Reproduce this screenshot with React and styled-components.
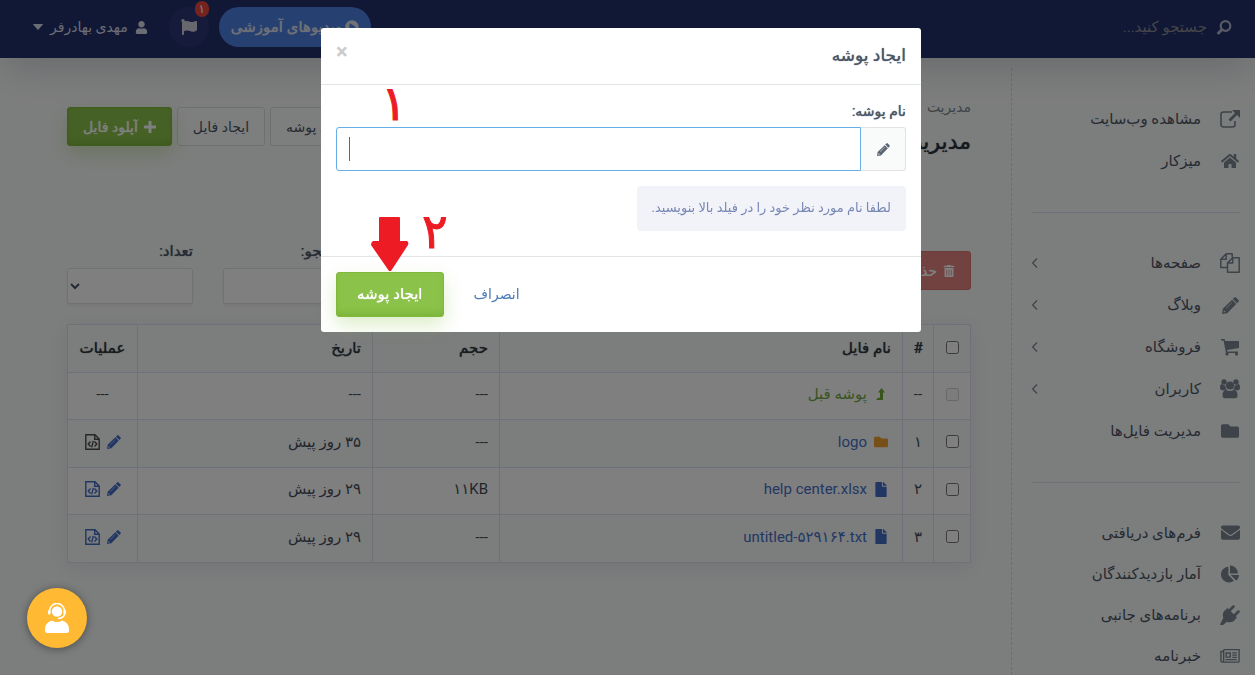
import React, { useState } from "react";
import styled, { createGlobalStyle } from "styled-components";
import {
  FaChartPie,
  FaEnvelope,
  FaFile,
  FaFlag,
  FaFolder,
  FaHome,
  FaPlayCircle,
  FaTrashAlt,
  FaUser,
} from "react-icons/fa";

const GlobalStyle = createGlobalStyle`
  * {
    box-sizing: border-box;
  }

  body {
    margin: 0;
    background: #f9fbfa;
    color: #4c5667;
    font-family: Roboto, "DejaVu Sans", sans-serif;
    font-size: 14px;
    line-height: 20px;
    overflow: hidden;
  }

  button,
  input,
  select {
    font: inherit;
    color: inherit;
  }

  a {
    color: inherit;
    text-decoration: none;
  }
`;

const Page = styled.div`
  direction: rtl;
  height: 100vh;
  display: flex;
  flex-direction: column;
`;

const Topbar = styled.header`
  display: flex;
  align-items: center;
  padding: 7px 23px 11px 33px;
  background: #22306c;
  color: #d7dbe8;
  box-shadow: 0 14px 36px -4px rgba(40, 40, 70, 0.18);
  z-index: 1;
`;

const SearchBox = styled.label`
  display: flex;
  align-items: center;
  gap: 10px;
  flex: 1;

  svg {
    color: #b0b5c9;
  }

  input {
    border: 0;
    padding: 0;
    background: none;
    outline: none;
    font-size: 15px;
  }

  input::placeholder {
    color: #8b8b93;
    opacity: 1;
  }
`;

const VideoButton = styled.button`
  display: flex;
  align-items: center;
  justify-content: space-between;
  width: 152px;
  height: 40px;
  padding: 0 12px;
  border: 0;
  border-radius: 20px;
  background: #4d80e4;
  color: #dfe3ec;
  font-size: 15px;
  white-space: nowrap;
  text-shadow: 0 0 1px currentColor;
`;

const FlagButton = styled.button`
  position: relative;
  width: 40px;
  height: 40px;
  margin: 0 10px 0 21px;
  padding: 0;
  border: 0;
  border-radius: 50%;
  background: #2d3677;
  color: #cdd1dc;

  svg {
    display: block;
    margin: 0 auto;
  }
`;

const Badge = styled.span`
  position: absolute;
  top: -6px;
  right: 0;
  width: 14px;
  height: 16px;
  border-radius: 8px;
  background: #e9473f;
  color: #fff;
  font-size: 12px;
  line-height: 16px;
`;

const UserMenu = styled.button`
  display: flex;
  align-items: center;
  gap: 7px;
  padding: 0;
  border: 0;
  background: none;
`;

const Columns = styled.div`
  display: flex;
  flex: 1;
  min-height: 0;
`;

const Sidebar = styled.nav`
  width: 244px;
  flex: none;
  margin-top: 10px;
  padding: 30px 15px 0 20px;
  border-left: 1px dashed #d8dadb;
  overflow: hidden;
`;

const MenuGroup = styled.ul`
  list-style: none;
  margin: 0 0 29px;
  padding: 0 0 30px;
  border-bottom: 1px solid #dfe1f0;

  &:last-child {
    border: 0;
  }
`;

const MenuItem = styled.li`
  height: ${(props) => (props.$dense ? "41px" : "42px")};

  a {
    display: flex;
    align-items: center;
    height: 100%;
    gap: 19px;
    font-size: 15px;
  }

  span {
    flex: 1;
  }
`;

const MenuIcon = styled.i`
  display: flex;
  justify-content: center;
  width: 20px;
  color: #7b8793;
`;

const Content = styled.main`
  flex: 1;
  min-width: 0;
  padding: 39px 40px 0 67px;
`;

const PageHead = styled.div`
  display: flex;
  justify-content: space-between;
  align-items: flex-start;
  height: 144px;
  padding-top: 10px;
`;

const Breadcrumb = styled.div`
  margin-top: -10px;
  color: #7c8790;
`;

const Title = styled.h1`
  margin: 10px 0 0;
  color: #2b343f;
  font-size: 22px;
  font-weight: normal;
  line-height: 30px;
  text-shadow: 0 0 1px currentColor;
`;

const Actions = styled.div`
  display: flex;
  gap: 5px;
`;

const Button = styled.button`
  display: flex;
  align-items: center;
  justify-content: center;
  gap: 6px;
  height: 39px;
  padding: 0 15px;
  border: 1px solid #dcdfe3;
  border-radius: 3px;
  background: #fbfcfc;
`;

const GreenButton = styled(Button)`
  border-color: #7fb83a;
  background: #8bc34a;
  color: #fff;
  text-shadow: 0 0 1px currentColor;
  box-shadow: inset 0 -5px 8px -4px #74ac33,
    0 8px 18px rgba(139, 195, 74, 0.3);
`;

const RedButton = styled(Button)`
  border-color: #d87472;
  background: #e58481;
  color: #fff;
  text-shadow: 0 0 1px currentColor;
`;

const Filters = styled.div`
  display: flex;
  align-items: flex-start;
  gap: 30px;
  margin-bottom: 20px;

  ${RedButton} {
    margin: 10px 0 0 auto;
  }
`;

const Field = styled.label`
  width: 126px;
  font-size: 15px;
  text-shadow: 0 0 1px currentColor;

  input,
  select {
    display: block;
    width: 100%;
    height: 36px;
    margin-top: 7px;
    padding: 0 5px;
    border: 1px solid #e0e2e6;
    border-radius: 3px;
    background: #fff;
    box-shadow: 0 2px 3px rgba(0, 0, 0, 0.06);
  }
`;

const FileTable = styled.table`
  width: 100%;
  border-collapse: collapse;
  table-layout: fixed;
  color: #454d58;
  box-shadow: 0 4px 20px rgba(70, 70, 130, 0.1);

  th,
  td {
    height: 47px;
    padding: 0 11px 4px;
    border: 1px solid #e0e2f0;
    text-align: right;
    font-size: 15px;
  }

  th {
    height: 48px;
    padding-bottom: 2px;
    color: #303841;
    font-weight: normal;
    text-shadow: 0 0 1px currentColor;
  }

  tbody tr:nth-child(odd) {
    background: #fff;
  }

  tbody tr:nth-child(even) td {
    height: 48px;
  }

  th:nth-child(2),
  td:nth-child(2),
  th:last-child,
  td:last-child {
    padding-left: 0;
    padding-right: 0;
    text-align: center;
  }

  input {
    display: block;
    margin: 0;
  }
`;

const FileLink = styled.a`
  display: flex;
  align-items: center;
  gap: 7px;
  color: ${(props) => props.$color || "#4770c9"};

  svg {
    width: 14px;
    margin-right: 3px;
    color: ${(props) => props.$iconColor};
  }
`;

const RowActions = styled.div`
  display: flex;
  align-items: center;
  justify-content: center;
  gap: 7px;
  color: #426cc7;

  svg {
    display: block;
  }

  a:last-child {
    color: ${(props) => (props.$dark ? "#4c4c4c" : "#426cc7")};
  }
`;

const Backdrop = styled.div`
  position: fixed;
  inset: 0;
  z-index: 10;
  padding: 28px 13px 0 0;
  direction: rtl;
  background: rgba(0, 0, 0, 0.5);
`;

const Dialog = styled.form`
  position: relative;
  max-width: 600px;
  margin: 0 auto;
  border-radius: 3px;
  background: #fff;
`;

const DialogHead = styled.div`
  display: flex;
  justify-content: space-between;
  height: 57px;
  padding: 14px 15px;
  border-bottom: 1px solid #e2e4e6;

  h2 {
    margin: 0;
    font-size: 17px;
    font-weight: normal;
    line-height: 26px;
    text-shadow: 0 0 1px currentColor;
  }
`;

const CloseButton = styled.button`
  height: 20px;
  padding: 0;
  border: 0;
  background: none;
  color: #ccc;
  font-weight: bold;
  font-size: 22px;
  line-height: 20px;
`;

const DialogBody = styled.div`
  padding: 16px 15px 25px;

  label {
    display: block;
    margin-bottom: 6px;
    text-shadow: 0 0 1px currentColor;
  }
`;

const InputGroup = styled.div`
  display: flex;
  height: 44px;

  input {
    flex: 1;
    min-width: 0;
    padding: 0 12px;
    border: 1px solid #66afe9;
    border-radius: 3px 0 0 3px;
    outline: none;
    background: #fff linear-gradient(#5d6874, #5d6874) 12px center / 1px 24px
      no-repeat;
  }
`;

const Addon = styled.span`
  display: flex;
  align-items: center;
  justify-content: center;
  width: 45px;
  border: 1px solid #e0e2e5;
  border-left: 0;
  border-radius: 0 3px 3px 0;
  background: #f9fafa;
  color: #5c6672;
`;

const Hint = styled.p`
  width: fit-content;
  margin: 15px 0 0;
  padding: 12px 15px 13px;
  border-radius: 4px;
  background: #f2f3f9;
  color: #7888b4;
  font-size: 13px;
`;

const DialogFoot = styled.div`
  display: flex;
  justify-content: flex-end;
  gap: 10px;
  padding: 15px;
  border-top: 1px solid #e2e4e6;

  button {
    height: 45px;
    padding: 0 20px 2px;
    font-size: 15px;
  }
`;

const CancelButton = styled.button`
  border: 0;
  background: none;
  color: #4a7ab8;

  && {
    font-size: 14px;
  }
`;

const StepNumber = styled.span`
  position: absolute;
  top: ${(props) => props.$top}px;
  left: ${(props) => props.$left}px;
  color: #ed1c24;
  font-size: 48px;
  line-height: 56px;
  -webkit-text-stroke: 1px #ed1c24;
`;

const StepArrow = styled.svg`
  position: absolute;
  top: 189px;
  left: 50px;
`;

const SupportButton = styled.button`
  position: fixed;
  left: 27px;
  bottom: 27px;
  z-index: 20;
  width: 60px;
  height: 60px;
  padding: 0;
  border: 0;
  border-radius: 50%;
  background: #ffb932;
  box-shadow: 0 1px 8px rgba(0, 0, 0, 0.4);

  svg {
    display: block;
    margin: 0 auto;
  }
`;

const SearchIcon = () => (
  <svg width="15" height="15" viewBox="0 0 15 15" fill="none">
    <circle cx="8.500" cy="6" r="4.800" stroke="currentColor" strokeWidth="2.200" />
    <path
      d="M5 9.500 1.500 13"
      stroke="currentColor"
      strokeWidth="3"
      strokeLinecap="round"
    />
  </svg>
);

const CaretIcon = () => (
  <svg width="10" height="6" viewBox="0 0 10 6" fill="currentColor">
    <path d="M.5 0h9q.8 0 .2.800L5.500 5.500q-.5.500-1 0L.3.800Q-.3 0 .5 0z" />
  </svg>
);

const PlusIcon = () => (
  <svg width="12" height="12" viewBox="0 0 12 12" fill="currentColor">
    <path d="M4.500 0h3v4.500H12v3H7.500V12h-3V7.500H0v-3h4.500z" />
  </svg>
);

const PencilIcon = ({ size }) => (
  <svg width={size} height={size} viewBox="0 0 17 17" fill="currentColor">
    <path d="M12.300.6q.9-.9 1.800 0l2.300 2.300q.9.900 0 1.800L14.900 6.200 10.800 2.100z" />
    <path
      fillRule="evenodd"
      d="M10.100 2.800 14.200 6.900 5.200 16.200 0 17l.8-5.200zM9.900 5.200 4 11.100l.3.300 5.900-5.900zM1.900 13.700l-.3 1.700 1.700-.3v-.9h-.9v-.5z"
    />
  </svg>
);

const BackIcon = () => (
  <svg width="10" height="13" viewBox="0 0 10 13" fill="currentColor">
    <path d="M5.500 0 9 4.500H7V12H0L2 9.800h2V4.500H2z" />
  </svg>
);

const CodeFileIcon = () => (
  <svg
    width="15"
    height="16"
    viewBox="0 0 15 16"
    fill="none"
    stroke="currentColor"
    strokeWidth="1.400"
  >
    <path d="M.8.700h9.200L14.200 5v10.300H.8zM9.700.7v4.500h4.500" />
    <path d="M5.500 7.500 3.200 10l2.300 2.500M9.500 7.500l2.300 2.500-2.300 2.500M8.300 6.800l-1.600 6.500" />
  </svg>
);

const ExternalIcon = () => (
  <svg width="20" height="18" viewBox="0 0 20 18" fill="none">
    <path
      d="M12 2H3.500Q1 2 1 4.500v9.500Q1 17 3.500 17h9Q15 17 15 14.500V11"
      stroke="currentColor"
      strokeWidth="1.600"
    />
    <path d="M12 0h8v8l-3-3-6.500 6.500L8.500 9.500 15 3z" fill="currentColor" />
  </svg>
);

const CopyIcon = () => (
  <svg
    width="20"
    height="20"
    viewBox="0 0 20 20"
    fill="none"
    stroke="currentColor"
    strokeWidth="1.500"
    strokeLinejoin="round"
  >
    <path d="M7 14.500H.8V6.200L6.200.8h6V4.500M6.200.8v5.400H.8" />
    <path d="M12.700 4.700h6.500v14.500H7.500V9.900zM12.700 4.700v5.200H7.500" />
  </svg>
);

const CartIcon = () => (
  <svg width="18" height="17" viewBox="0 0 18 17" fill="currentColor">
    <path d="M0 0h3.500l.8 2H18v7L6 11l.4 1.500H17V14H5L2.500 1.500H0z" />
    <rect x="4.500" y="13.500" width="3" height="3" rx="1" />
    <rect x="14" y="13.500" width="3" height="3" rx="1" />
  </svg>
);

const UsersIcon = () => (
  <svg width="20" height="20" viewBox="0 0 20 20" fill="currentColor">
    <circle cx="4" cy="3" r="2.700" />
    <circle cx="16" cy="3" r="2.700" />
    <circle cx="10" cy="6.500" r="4" />
    <path d="M5.300 6.300Q5.300 9 7 10.500 4.500 10.500 3.500 11.300 0 11.300 0 9q0-4 1.800-4 2 1.700 3.500 1.300zM14.700 6.300Q14.700 9 13 10.500q2.500 0 3.500.8 3.500 0 3.500-2.300 0-4-1.800-4-2 1.700-3.500 1.300z" />
    <path d="M6 10.800q4 2.400 8 0 3.500.4 3.500 5.700 0 2.800-2.500 2.800H5q-2.500 0-2.500-2.800 0-5.300 3.500-5.700z" />
  </svg>
);

const PlugIcon = () => (
  <svg width="20" height="20" viewBox="0 0 20 20" fill="currentColor">
    <path d="M5 5 15 15q-3.500 3.500-8 1.700L3 20H.5L0 19.500 3.300 13Q1.800 8.500 5 5z" />
    <path d="m5 5.500 2.500-2.500 9.500 9.500-2.500 2.500z" />
    <path
      d="m9 6 4.500-4.500M14 11l4.500-4.500"
      stroke="currentColor"
      strokeWidth="2.500"
      strokeLinecap="round"
    />
  </svg>
);

const NewsIcon = () => (
  <svg width="22" height="16" viewBox="0 0 22 16" fill="none" stroke="currentColor">
    <path
      d="M4 1h17v12.500q0 1.300-1.300 1.300H2.500Q1 14.800 1 13V3h3M4 1v12q0 1.800-1.500 1.800"
      strokeWidth="1.500"
    />
    <path d="M6.700 4.700h4.600v4.600H6.700z" strokeWidth="1.500" />
    <path d="M13.500 4.500h5M13.500 7h5M13.500 9.500h5M6 12h12.500" strokeWidth="1.300" />
  </svg>
);

const ChevronIcon = () => (
  <svg width="8" height="12" viewBox="0 0 8 12" fill="none">
    <path d="M5 1.500.6 6 5 10.500" stroke="#7d8594" strokeWidth="1.200" />
  </svg>
);

const SupportIcon = () => (
  <svg width="24" height="30" viewBox="0 0 24 30" fill="#fff">
    <circle cx="12" cy="8.500" r="5.200" />
    <path
      d="M4.500 10V8a7.500 7.500 0 0 1 15 0v2q0 5-6.500 5.500"
      fill="none"
      stroke="#fff"
      strokeWidth="1.500"
    />
    <rect x="3" y="7" width="2.500" height="4.500" rx="1" />
    <rect x="18.500" y="7" width="2.500" height="4.500" rx="1" />
    <path d="M7 17.500q5 3 10 0 7 2 7 8.500v2q0 2-2 2H2q-2 0-2-2v-2q0-6.500 7-8.500z" />
  </svg>
);

const menuGroups = [
  {
    items: [
      { title: "مشاهده وب‌سایت", icon: <ExternalIcon /> },
      { title: "میزکار", icon: <FaHome size={18} /> },
    ],
  },
  {
    items: [
      { title: "صفحه‌ها", icon: <CopyIcon />, sub: true },
      { title: "وبلاگ", icon: <PencilIcon size={17} />, sub: true },
      { title: "فروشگاه", icon: <CartIcon />, sub: true },
      { title: "کاربران", icon: <UsersIcon />, sub: true },
      { title: "مدیریت فایل‌ها", icon: <FaFolder size={18} /> },
    ],
  },
  {
    dense: true,
    items: [
      { title: "فرم‌های دریافتی", icon: <FaEnvelope size={19} /> },
      { title: "آمار بازدیدکنندگان", icon: <FaChartPie size={18} /> },
      { title: "برنامه‌های جانبی", icon: <PlugIcon /> },
      { title: "خبرنامه", icon: <NewsIcon /> },
    ],
  },
];

const files = [
  { id: "۱", name: "logo", size: "---", date: "۳۵ روز پیش", folder: true },
  { id: "۲", name: "help center.xlsx", size: "۱۱KB", date: "۲۹ روز پیش" },
  { id: "۳", name: "untitled-۵۲۹۱۶۴.txt", size: "---", date: "۲۹ روز پیش" },
];

const FileManager = () => (
  <FileTable>
    <colgroup>
      <col style={{ width: 37 }} />
      <col style={{ width: 31 }} />
      <col />
      <col style={{ width: 127 }} />
      <col style={{ width: 235 }} />
      <col style={{ width: 70 }} />
    </colgroup>
    <thead>
      <tr>
        <th>
          <input type="checkbox" aria-label="همه" />
        </th>
        <th>#</th>
        <th>نام فایل</th>
        <th>حجم</th>
        <th>تاریخ</th>
        <th>عملیات</th>
      </tr>
    </thead>
    <tbody>
      <tr>
        <td>
          <input type="checkbox" aria-label="پوشه قبل" disabled />
        </td>
        <td>--</td>
        <td>
          <FileLink href="#" $color="#74a83a" $iconColor="#74a83a">
            <BackIcon />
            پوشه قبل
          </FileLink>
        </td>
        <td>---</td>
        <td>---</td>
        <td>---</td>
      </tr>
      {files.map((file) => (
        <tr key={file.id}>
          <td>
            <input type="checkbox" aria-label={file.name} />
          </td>
          <td>{file.id}</td>
          <td>
            <FileLink href="#" $iconColor={file.folder ? "#eea033" : "#426cc7"}>
              {file.folder ? <FaFolder size={14} /> : <FaFile size={15} />}
              <bdi dir="ltr">{file.name}</bdi>
            </FileLink>
          </td>
          <td>
            <bdi dir="ltr">{file.size}</bdi>
          </td>
          <td>{file.date}</td>
          <td>
            <RowActions $dark={file.folder}>
              <a href="#" aria-label="ویرایش">
                <PencilIcon size={14} />
              </a>
              <a href="#" aria-label="کد">
                <CodeFileIcon />
              </a>
            </RowActions>
          </td>
        </tr>
      ))}
    </tbody>
  </FileTable>
);

const CreateFolderDialog = ({ onClose }) => {
  const [name, setName] = useState("");
  return (
    <Backdrop>
      <Dialog onSubmit={(e) => e.preventDefault()}>
        <DialogHead>
          <h2>ایجاد پوشه</h2>
          <CloseButton type="button" onClick={onClose}>
            ×
          </CloseButton>
        </DialogHead>
        <DialogBody>
          <label htmlFor="folder-name">نام پوشه:</label>
          <InputGroup>
            <Addon>
              <PencilIcon size={13} />
            </Addon>
            <input
              id="folder-name"
              dir="ltr"
              value={name}
              onChange={(e) => setName(e.target.value)}
            />
          </InputGroup>
          <Hint>لطفا نام مورد نظر خود را در فیلد بالا بنویسید.</Hint>
        </DialogBody>
        <DialogFoot>
          <CancelButton type="button" onClick={onClose}>
            انصراف
          </CancelButton>
          <GreenButton type="submit">ایجاد پوشه</GreenButton>
        </DialogFoot>
        <StepNumber $top={48} $left={60}>
          ۱
        </StepNumber>
        <StepNumber $top={176} $left={101}>
          ۲
        </StepNumber>
        <StepArrow width="38" height="55" viewBox="0 0 38 55" fill="#ed1c24">
          <path d="M9 0h19q1 0 1 1v23h7q2 1 1 4L20 54h-2L0 28q0-3 2-4h6V1q0-1 1-1z" />
        </StepArrow>
      </Dialog>
    </Backdrop>
  );
};

const App = () => {
  const [showDialog, setShowDialog] = useState(true);
  return (
    <>
      <GlobalStyle />
      <Page>
        <Topbar>
          <SearchBox>
            <SearchIcon />
            <input type="text" placeholder="جستجو کنید..." />
          </SearchBox>
          <VideoButton>
            <FaPlayCircle size={14} />
            ویدیوهای آموزشی
          </VideoButton>
          <FlagButton>
            <FaFlag size={16} />
            <Badge>۱</Badge>
          </FlagButton>
          <UserMenu>
            <FaUser size={13} />
            مهدی بهادرفر
            <CaretIcon />
          </UserMenu>
        </Topbar>
        <Columns>
          <Sidebar>
            {menuGroups.map((group, index) => (
              <MenuGroup key={index}>
                {group.items.map((item) => (
                  <MenuItem key={item.title} $dense={group.dense}>
                    <a href="#">
                      <MenuIcon>{item.icon}</MenuIcon>
                      <span>{item.title}</span>
                      {item.sub && <ChevronIcon />}
                    </a>
                  </MenuItem>
                ))}
              </MenuGroup>
            ))}
          </Sidebar>
          <Content>
            <PageHead>
              <div>
                <Breadcrumb>مدیریت</Breadcrumb>
                <Title>مدیریت فایل‌ها</Title>
              </div>
              <Actions>
                <Button onClick={() => setShowDialog(true)}>ایجاد پوشه</Button>
                <Button>ایجاد فایل</Button>
                <GreenButton>
                  <PlusIcon />
                  آپلود فایل
                </GreenButton>
              </Actions>
            </PageHead>
            <Filters>
              <RedButton>
                <FaTrashAlt size={12} />
                حذف
              </RedButton>
              <Field>
                جستجو:
                <input type="text" />
              </Field>
              <Field>
                تعداد:
                <select />
              </Field>
            </Filters>
            <FileManager />
          </Content>
        </Columns>
      </Page>
      {showDialog && (
        <CreateFolderDialog onClose={() => setShowDialog(false)} />
      )}
      <SupportButton aria-label="پشتیبانی">
        <SupportIcon />
      </SupportButton>
    </>
  );
};

export default App;
